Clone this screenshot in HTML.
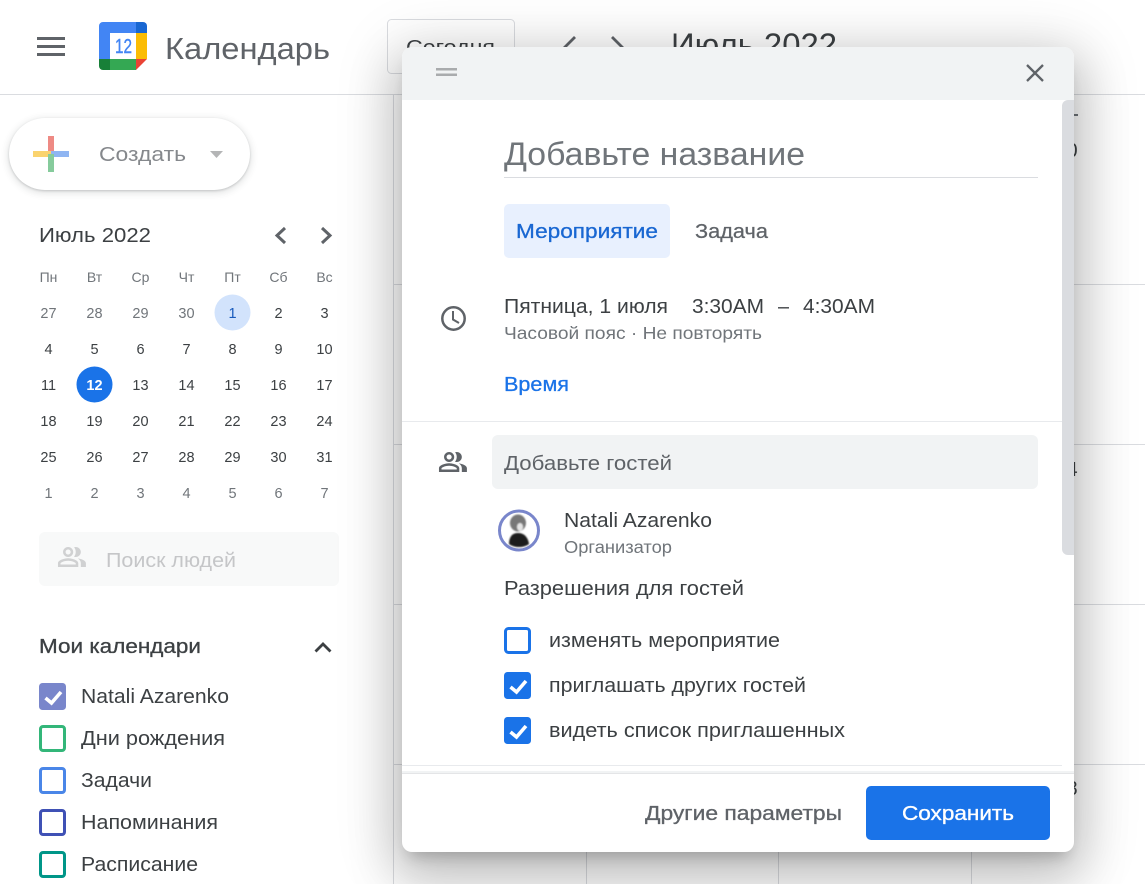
<!DOCTYPE html>
<html lang="ru">
<head>
<meta charset="utf-8">
<title>Календарь</title>
<style>
html,body{margin:0;padding:0;background:#fff;}
body{width:1145px;height:884px;overflow:hidden;position:relative;font-family:"Liberation Sans","Noto Sans CJK SC",sans-serif;}
svg{position:absolute;left:0;top:0;display:block;}
svg text{font-family:"Liberation Sans","Noto Sans CJK SC",sans-serif;}
#dialog{position:absolute;left:402px;top:47px;width:672px;height:805px;background:#fff;border-radius:10px;box-shadow:0 22px 48px 8px rgba(0,0,0,.17),0 8px 60px 10px rgba(0,0,0,.13),0 11px 15px -7px rgba(0,0,0,.2);}
#create{position:absolute;left:9px;top:118px;width:241px;height:72px;border-radius:36px;background:#fff;box-shadow:0 1px 2px 0 rgba(60,64,67,.22),0 2px 7px 2px rgba(60,64,67,.12);}
</style>
</head>
<body>
<svg width="1145" height="884" viewBox="0 0 1145 884">
  <defs><filter id="soft" x="-20%" y="-20%" width="140%" height="140%"><feGaussianBlur stdDeviation="0.9"/></filter></defs>
  <!-- grid -->
  <g stroke="#dadce0" stroke-width="1">
    <line x1="0" y1="94.5" x2="1145" y2="94.5"/>
    <line x1="393.5" y1="95" x2="393.5" y2="884"/>
    <line x1="586.5" y1="95" x2="586.5" y2="884"/>
    <line x1="778.5" y1="95" x2="778.5" y2="884"/>
    <line x1="971.5" y1="95" x2="971.5" y2="884"/>
    <line x1="393" y1="284.5" x2="1145" y2="284.5"/>
    <line x1="393" y1="444.5" x2="1145" y2="444.5"/>
    <line x1="393" y1="604.5" x2="1145" y2="604.5"/>
    <line x1="393" y1="764.5" x2="1145" y2="764.5"/>
  </g>
  <!-- hamburger -->
  <g fill="#5f6368">
    <rect x="37" y="37" width="28" height="3"/>
    <rect x="37" y="45" width="28" height="3"/>
    <rect x="37" y="53" width="28" height="3"/>
  </g>
  <!-- logo -->
  <path d="M103 22h33v11h-26v26H99V26a4 4 0 0 1 4-4z" fill="#4285f4"/>
  <path d="M136 22h7a4 4 0 0 1 4 4v7h-11z" fill="#1967d2"/>
  <rect x="136" y="33" width="11" height="26" fill="#fbbc04"/>
  <rect x="110" y="59" width="26" height="11" fill="#34a853"/>
  <path d="M99 59h11v11h-7a4 4 0 0 1-4-4z" fill="#188038"/>
  <path d="M136 59h11l-11 11z" fill="#ea4335"/>
  <text x="115" y="53" font-size="20" fill="#4285f4" stroke="#4285f4" stroke-width=".4" textLength="17" lengthAdjust="spacingAndGlyphs">12</text>
  <text x="165" y="59" font-size="31" fill="#5f6368" textLength="165" lengthAdjust="spacingAndGlyphs">Календарь</text>
  <!-- top bar -->
  <rect x="387.5" y="19.5" width="127" height="54" rx="4" fill="#fff" stroke="#dadce0"/>
  <text x="406" y="54" font-size="20" fill="#3c4043" textLength="89" lengthAdjust="spacingAndGlyphs">Сегодня</text>
  <path d="M575 37l-10 10 10 10" fill="none" stroke="#5f6368" stroke-width="2.8"/>
  <path d="M612 37l10 10-10 10" fill="none" stroke="#5f6368" stroke-width="2.8"/>
  <text x="671" y="56" font-size="32" fill="#3c4043" textLength="166" lengthAdjust="spacingAndGlyphs">Июль 2022</text>
  <!-- mini calendar -->
  <text x="39" y="242" font-size="20" fill="#3c4043" textLength="112" lengthAdjust="spacingAndGlyphs">Июль 2022</text>
  <path d="M285 228l-8 7.500 8 7.500" fill="none" stroke="#5f6368" stroke-width="3"/>
  <path d="M322 228l8 7.500-8 7.500" fill="none" stroke="#5f6368" stroke-width="3"/>
  <g font-size="14" fill="#70757a" text-anchor="middle">
    <text x="48.500" y="282">Пн</text><text x="94.500" y="282">Вт</text><text x="140.500" y="282">Ср</text><text x="186.500" y="282">Чт</text><text x="232.500" y="282">Пт</text><text x="278.500" y="282">Сб</text><text x="324.500" y="282">Вс</text>
  </g>
  <circle cx="232.500" cy="312.500" r="18" fill="#d2e3fc"/>
  <circle cx="94.500" cy="384.500" r="18" fill="#1a73e8"/>
  <g font-size="14.500" text-anchor="middle" fill="#3c4043">
    <g fill="#70757a"><text x="48.500" y="318">27</text><text x="94.500" y="318">28</text><text x="140.500" y="318">29</text><text x="186.500" y="318">30</text></g>
    <text x="232.500" y="318" fill="#185abc">1</text><text x="278.500" y="318">2</text><text x="324.500" y="318">3</text>
    <text x="48.500" y="354">4</text><text x="94.500" y="354">5</text><text x="140.500" y="354">6</text><text x="186.500" y="354">7</text><text x="232.500" y="354">8</text><text x="278.500" y="354">9</text><text x="324.500" y="354">10</text>
    <text x="48.500" y="390">11</text><text x="94.500" y="390" fill="#fff" font-weight="bold">12</text><text x="140.500" y="390">13</text><text x="186.500" y="390">14</text><text x="232.500" y="390">15</text><text x="278.500" y="390">16</text><text x="324.500" y="390">17</text>
    <text x="48.500" y="426">18</text><text x="94.500" y="426">19</text><text x="140.500" y="426">20</text><text x="186.500" y="426">21</text><text x="232.500" y="426">22</text><text x="278.500" y="426">23</text><text x="324.500" y="426">24</text>
    <text x="48.500" y="462">25</text><text x="94.500" y="462">26</text><text x="140.500" y="462">27</text><text x="186.500" y="462">28</text><text x="232.500" y="462">29</text><text x="278.500" y="462">30</text><text x="324.500" y="462">31</text>
    <g fill="#70757a"><text x="48.500" y="498">1</text><text x="94.500" y="498">2</text><text x="140.500" y="498">3</text><text x="186.500" y="498">4</text><text x="232.500" y="498">5</text><text x="278.500" y="498">6</text><text x="324.500" y="498">7</text></g>
  </g>
  <!-- people search -->
  <rect x="39" y="532" width="300" height="54" rx="6" fill="#f8f9f9"/>
  <path transform="translate(56.700,542) scale(1.270,1.250)" fill="#d0d1d2" fill-rule="evenodd" d="M16.670 13.130C18.040 14.060 19 15.320 19 17v3h4v-3c0-2.180-3.570-3.470-6.330-3.870z M15 12c2.210 0 4-1.790 4-4s-1.790-4-4-4c-.47 0-.91.1-1.330.24C14.500 5.270 15 6.580 15 8s-.5 2.730-1.330 3.760c.42.14.86.24 1.330.24z M9 12c2.210 0 4-1.790 4-4s-1.790-4-4-4-4 1.790-4 4 1.790 4 4 4zm0-6c1.100 0 2 .9 2 2s-.9 2-2 2-2-.9-2-2 .9-2 2-2z M9 13c-2.670 0-8 1.340-8 4v3h16v-3c0-2.660-5.330-4-8-4zm6 5H3v-.99C3.200 16.290 6.300 15 9 15s5.800 1.290 6 2z"/>
  <text x="106" y="567" font-size="20.500" fill="#c5c6c8" textLength="130" lengthAdjust="spacingAndGlyphs">Поиск людей</text>
  <!-- my calendars -->
  <text x="39" y="653" font-size="20" fill="#3c4043" stroke="#3c4043" stroke-width=".3" textLength="162" lengthAdjust="spacingAndGlyphs">Мои календари</text>
  <path d="M315.500 651.500l7.500-7.500 7.500 7.500" fill="none" stroke="#3c4043" stroke-width="2.800"/>
  <rect x="39" y="683" width="27" height="27" rx="3.500" fill="#7986cb"/>
  <path d="M45.500 698l6 5L61 692" fill="none" stroke="#fff" stroke-width="3.600"/>
  <g fill="none" stroke-width="3">
    <rect x="40.500" y="726.500" width="24" height="24" rx="2.500" stroke="#33b679"/>
    <rect x="40.500" y="768.500" width="24" height="24" rx="2.500" stroke="#4a86e8"/>
    <rect x="40.500" y="810.500" width="24" height="24" rx="2.500" stroke="#3f51b5"/>
    <rect x="40.500" y="852.500" width="24" height="24" rx="2.500" stroke="#009688"/>
  </g>
  <g font-size="20" fill="#3c4043">
    <text x="81" y="703" textLength="148" lengthAdjust="spacingAndGlyphs">Natali Azarenko</text>
    <text x="81" y="745" textLength="144" lengthAdjust="spacingAndGlyphs">Дни рождения</text>
    <text x="81" y="787" textLength="71" lengthAdjust="spacingAndGlyphs">Задачи</text>
    <text x="81" y="829" textLength="137" lengthAdjust="spacingAndGlyphs">Напоминания</text>
    <text x="81" y="871" textLength="117" lengthAdjust="spacingAndGlyphs">Расписание</text>
  </g>
  <!-- fragments behind the dialog -->
  <g font-size="20" fill="#3c4043" text-anchor="middle">
    <text x="1072" y="157">0</text>
    <text x="1072" y="476">4</text>
    <text x="1072" y="795">8</text>
  </g>
  <rect x="1073" y="114" width="5" height="2" fill="#70757a"/>
</svg>

<div id="create"></div>
<svg width="1145" height="884" viewBox="0 0 1145 884" style="pointer-events:none">
  <rect x="48" y="136" width="6" height="18" fill="#ee8a84"/>
  <rect x="33" y="151" width="18" height="6" fill="#fad36e"/>
  <rect x="51" y="151" width="18" height="6" fill="#8fb5f2"/>
  <rect x="48" y="154" width="6" height="18" fill="#86cb9c"/>
  <text x="99" y="161" font-size="20.500" fill="#85888c" textLength="87" lengthAdjust="spacingAndGlyphs">Создать</text>
  <path d="M210 151h13l-6.500 7z" fill="#b4b5b6"/>
</svg>

<div id="dialog"></div>

<svg width="1145" height="884" viewBox="0 0 1145 884">
  <defs><filter id="soft2" x="-20%" y="-20%" width="140%" height="140%"><feGaussianBlur stdDeviation="0.9"/></filter></defs>
  <!-- dialog header -->
  <path d="M402 100V57a10 10 0 0 1 10-10h652a10 10 0 0 1 10 10v43z" fill="#f1f3f4"/>
  <rect x="436" y="68" width="21" height="2.500" fill="#a9abad"/>
  <rect x="436" y="73.500" width="21" height="2.500" fill="#a9abad"/>
  <path d="M1027 65l16 16M1043 65l-16 16" fill="none" stroke="#5f6368" stroke-width="2.300"/>
  <!-- scrollbar -->
  <path d="M1062 106a6 6 0 0 1 6-6h6v455h-6a6 6 0 0 1-6-6z" fill="#dadce0"/>
  <!-- title -->
  <text x="504" y="165" font-size="32" fill="#70757a" textLength="301" lengthAdjust="spacingAndGlyphs">Добавьте название</text>
  <rect x="504" y="177" width="534" height="1" fill="#dadce0"/>
  <!-- tabs -->
  <rect x="504" y="204" width="166" height="54" rx="5" fill="#e8f0fe"/>
  <text x="516" y="238" font-size="20" fill="#1967d2" stroke="#1967d2" stroke-width=".3" textLength="142" lengthAdjust="spacingAndGlyphs">Мероприятие</text>
  <text x="695" y="238" font-size="20" fill="#5f6368" stroke="#5f6368" stroke-width=".25" textLength="73" lengthAdjust="spacingAndGlyphs">Задача</text>
  <!-- date/time -->
  <circle cx="453.500" cy="318.500" r="11.200" fill="none" stroke="#5f6368" stroke-width="2.500"/>
  <path d="M453 311v8.500l6 3.500" fill="none" stroke="#5f6368" stroke-width="2"/>
  <g font-size="20" fill="#3c4043">
    <text x="504" y="313" textLength="164" lengthAdjust="spacingAndGlyphs">Пятница, 1 июля</text>
    <text x="692" y="313" textLength="72" lengthAdjust="spacingAndGlyphs">3:30AM</text>
    <text x="778" y="313" textLength="11" lengthAdjust="spacingAndGlyphs">–</text>
    <text x="803" y="313" textLength="72" lengthAdjust="spacingAndGlyphs">4:30AM</text>
  </g>
  <text x="504" y="339" font-size="17.300" fill="#70757a" textLength="258" lengthAdjust="spacingAndGlyphs">Часовой пояс · Не повторять</text>
  <text x="504" y="391" font-size="20" fill="#1a73e8" stroke="#1a73e8" stroke-width=".3" textLength="65" lengthAdjust="spacingAndGlyphs">Время</text>
  <rect x="402" y="421" width="660" height="1" fill="#e8eaed"/>
  <!-- guests -->
  <path transform="translate(437.700,447) scale(1.270,1.250)" fill="#5f6368" fill-rule="evenodd" d="M16.670 13.130C18.040 14.060 19 15.320 19 17v3h4v-3c0-2.180-3.570-3.470-6.330-3.870z M15 12c2.210 0 4-1.790 4-4s-1.790-4-4-4c-.47 0-.91.1-1.330.24C14.500 5.270 15 6.580 15 8s-.5 2.730-1.330 3.760c.42.14.86.24 1.330.24z M9 12c2.210 0 4-1.790 4-4s-1.790-4-4-4-4 1.790-4 4 1.790 4 4 4zm0-6c1.100 0 2 .9 2 2s-.9 2-2 2-2-.9-2-2 .9-2 2-2z M9 13c-2.670 0-8 1.340-8 4v3h16v-3c0-2.660-5.330-4-8-4zm6 5H3v-.99C3.200 16.290 6.300 15 9 15s5.800 1.290 6 2z"/>
  <rect x="492" y="435" width="546" height="54" rx="6" fill="#f1f3f4"/>
  <text x="504" y="470" font-size="20" fill="#5f6368" textLength="168" lengthAdjust="spacingAndGlyphs">Добавьте гостей</text>
  <!-- avatar -->
  <circle cx="519" cy="530.500" r="19.500" fill="#fff" stroke="#7986cb" stroke-width="3"/>
  <g filter="url(#soft2)">
    <ellipse cx="518" cy="523" rx="8" ry="8.500" fill="#777"/>
    <ellipse cx="520" cy="527" rx="3" ry="4" fill="#e4e4e4"/>
    <path d="M509 544c0-7 3-11 9-11s10 4 11 11c-3 2-6 3-10 3s-7-1-10-3z" fill="#1d1d1d"/>
  </g>
  <text x="564" y="527" font-size="20" fill="#3c4043" textLength="148" lengthAdjust="spacingAndGlyphs">Natali Azarenko</text>
  <text x="564" y="553" font-size="17.300" fill="#70757a" textLength="108" lengthAdjust="spacingAndGlyphs">Организатор</text>
  <text x="504" y="595" font-size="20" fill="#3c4043" textLength="240" lengthAdjust="spacingAndGlyphs">Разрешения для гостей</text>
  <!-- permissions -->
  <rect x="505.500" y="628.500" width="24" height="24" rx="3" fill="none" stroke="#1a73e8" stroke-width="3"/>
  <rect x="504" y="672" width="27" height="27" rx="3.500" fill="#1a73e8"/>
  <path d="M510.500 687l6 5L526 681" fill="none" stroke="#fff" stroke-width="3.600"/>
  <rect x="504" y="717" width="27" height="27" rx="3.500" fill="#1a73e8"/>
  <path d="M510.500 732l6 5L526 726" fill="none" stroke="#fff" stroke-width="3.600"/>
  <g font-size="20" fill="#3c4043">
    <text x="549" y="647" textLength="231" lengthAdjust="spacingAndGlyphs">изменять мероприятие</text>
    <text x="549" y="692" textLength="257" lengthAdjust="spacingAndGlyphs">приглашать других гостей</text>
    <text x="549" y="737" textLength="296" lengthAdjust="spacingAndGlyphs">видеть список приглашенных</text>
  </g>
  <rect x="402" y="765" width="660" height="1" fill="#e8eaed"/>
  <!-- footer -->
  <rect x="402" y="771" width="672" height="2" fill="#f1f3f4"/>
  <rect x="402" y="773" width="672" height="1" fill="#e4e5e7"/>
  <text x="645" y="820" font-size="20" fill="#5f6368" stroke="#5f6368" stroke-width=".3" textLength="197" lengthAdjust="spacingAndGlyphs">Другие параметры</text>
  <rect x="866" y="786" width="184" height="54" rx="5" fill="#1a73e8"/>
  <text x="902" y="820" font-size="20" fill="#fff" stroke="#fff" stroke-width=".35" textLength="112" lengthAdjust="spacingAndGlyphs">Сохранить</text>
</svg>
</body>
</html>
